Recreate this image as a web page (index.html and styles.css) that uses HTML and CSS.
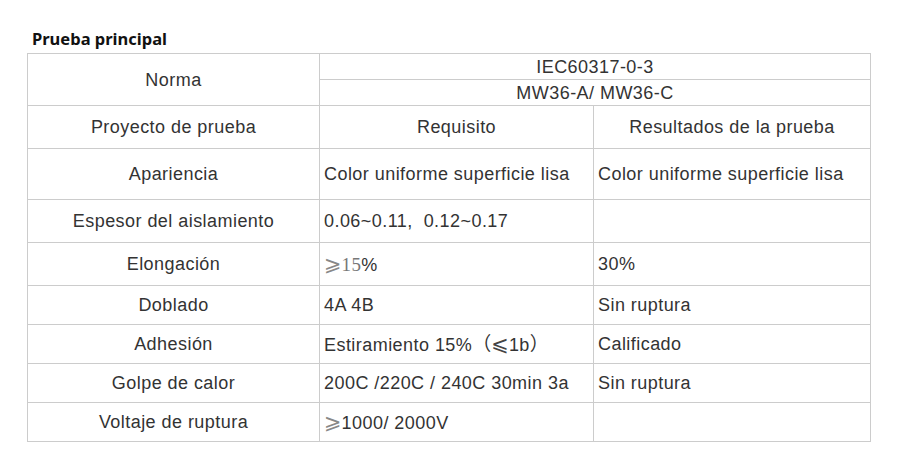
FILE: index.html
```html
<!DOCTYPE html>
<html lang="es">
<head>
<meta charset="utf-8">
<link rel="stylesheet" href="styles.css">
</head>
<body>
<div class="page">
  <h2 class="title">Prueba principal</h2>
  <table class="spec">
    <colgroup>
      <col class="c1"><col class="c2"><col class="c3">
    </colgroup>
    <tr class="h26">
      <td rowspan="2" class="center">Norma</td>
      <td colspan="2" class="center">IEC60317-0-3</td>
    </tr>
    <tr class="h26">
      <td colspan="2" class="center">MW36-A/ MW36-C</td>
    </tr>
    <tr class="h43">
      <td class="center">Proyecto de prueba</td>
      <td class="center">Requisito</td>
      <td class="center">Resultados de la prueba</td>
    </tr>
    <tr class="h51">
      <td class="center">Apariencia</td>
      <td>Color uniforme superficie lisa</td>
      <td>Color uniforme superficie lisa</td>
    </tr>
    <tr class="h43">
      <td class="center">Espesor del aislamiento</td>
      <td>0.06~0.11,&nbsp; 0.12~0.17</td>
      <td></td>
    </tr>
    <tr class="h43">
      <td class="center">Elongación</td>
      <td><span class="sym">⩾</span><span class="serif">15</span>%</td>
      <td>30%</td>
    </tr>
    <tr class="h39">
      <td class="center">Doblado</td>
      <td>4A 4B</td>
      <td>Sin ruptura</td>
    </tr>
    <tr class="h39">
      <td class="center">Adhesión</td>
      <td>Estiramiento 15%<span class="cjk">（</span><span class="sym dark">⩽</span>1b<span class="cjk">）</span></td>
      <td>Calificado</td>
    </tr>
    <tr class="h39">
      <td class="center">Golpe de calor</td>
      <td>200C /220C / 240C 30min 3a</td>
      <td>Sin ruptura</td>
    </tr>
    <tr class="h39">
      <td class="center">Voltaje de ruptura</td>
      <td><span class="sym">⩾</span>1000/ 2000V</td>
      <td></td>
    </tr>
  </table>
</div>
</body>
</html>
```

FILE: styles.css
```css
html, body {
  margin: 0;
  padding: 0;
  background: #ffffff;
}

.page {
  padding: 28px 0 0 27px;
}

.title {
  margin: 0 0 4px 5px;
  font-family: "Noto Sans", "Open Sans", sans-serif;
  font-weight: 700;
  font-size: 16.5px;
  line-height: 21px;
  color: #111111;
}

.spec {
  border-collapse: collapse;
  width: 843px;
  table-layout: fixed;
  font-family: "Liberation Sans", Arial, sans-serif;
  font-size: 18px;
  letter-spacing: 0.45px;
  color: #333333;
}

.c1 { width: 292px; }
.c2 { width: 274px; }
.c3 { width: 277px; }

.spec td {
  border: 1px solid #cccccc;
  padding: 0 4px;
  vertical-align: middle;
  white-space: nowrap;
  line-height: 20px;
}

.spec td.center {
  text-align: center;
}

.h26 { height: 26px; }
.h39 { height: 39px; }
.h43 { height: 43px; }
.h51 { height: 51px; }

.sym {
  font-family: "DejaVu Sans", sans-serif;
  color: #888888;
  font-size: 21px;
  letter-spacing: 0;
}

.sym.dark {
  color: #444444;
}

.serif {
  font-family: "Liberation Serif", serif;
  font-size: 19px;
  color: #777777;
  letter-spacing: 0.3px;
}

.cjk {
  font-family: "Noto Sans CJK SC", sans-serif;
  font-size: 19px;
  letter-spacing: 0;
  text-spacing-trim: space-all;
}
```
